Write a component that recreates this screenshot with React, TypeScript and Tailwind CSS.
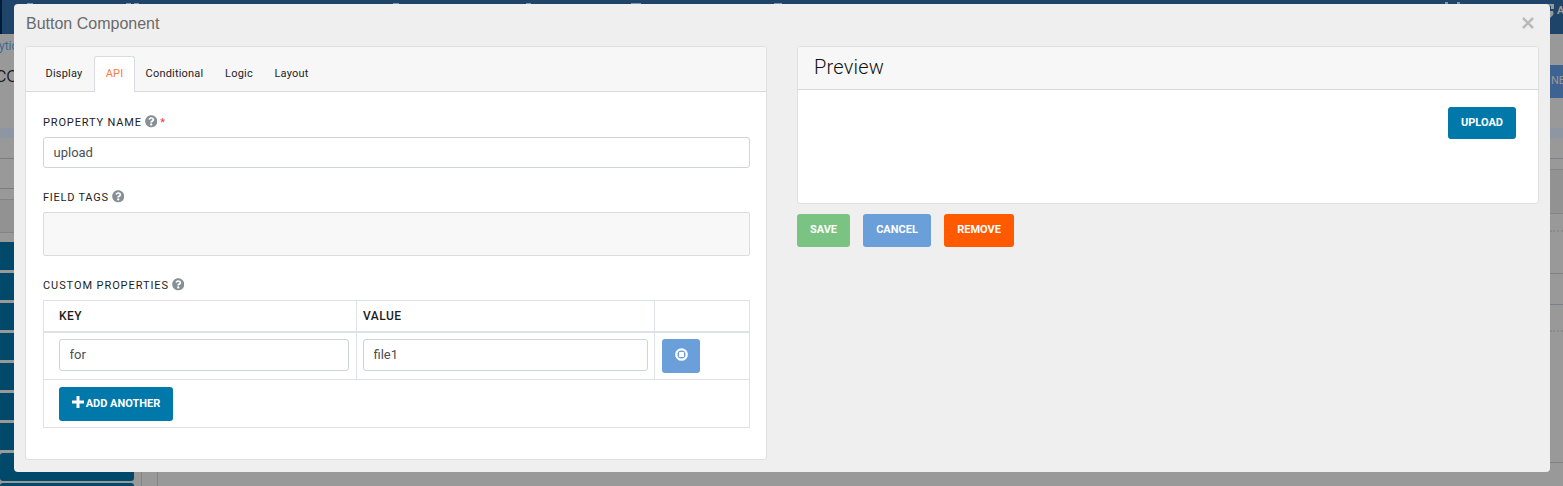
import type { ReactNode } from "react";
import { FaQuestionCircle } from "react-icons/fa";

const tabs = ["Display", "API", "Conditional", "Logic", "Layout"];
const tabWidths = ["w-[60px]", "w-[41px]", "w-[79px]", "w-[50px]", "w-[55px]"];

function Label({ text, required, className }: { text: string; required?: boolean; className: string }) {
  return (
    <div className={`flex h-4 items-start text-[11px] leading-[17px] text-[#1d1d1d] ${className}`}>
      <span>{text}</span>
      <FaQuestionCircle className="ml-[3px] mt-px size-[12.5px] text-[#868e96]" />
      {required && <span className="ml-[3px] text-[#f33]">*</span>}
    </div>
  );
}

function Button({ children, className }: { children: ReactNode; className: string }) {
  return (
    <button className={`flex items-start justify-center rounded-[3px] text-[11px] font-bold leading-4 text-white ${className}`}>
      {children}
    </button>
  );
}

function Field({ value, className }: { value: string; className: string }) {
  return (
    <input
      readOnly
      value={value}
      className={`block rounded-[3px] border border-[#ced4da] bg-white px-[9.5px] text-[13px] text-[#495057] outline-none ${className}`}
    />
  );
}

function Backdrop() {
  return (
    <div className="absolute inset-0 flex flex-col overflow-hidden bg-[#999]">
      <div className="flex h-[34px] shrink-0 border-l-2 border-[#001c3b] bg-[#1e4469]">
        <i className="ml-[25px] mt-[3px] h-px w-[6px] shrink-0 bg-[#8395a8]" />
        <i className="ml-[93px] mt-[3px] h-px w-[5px] shrink-0 bg-[#8395a8]" />
        <i className="ml-[3px] mt-[3px] h-px w-[5px] shrink-0 bg-[#8395a8]" />
        <i className="ml-[254px] mt-[3px] h-px w-[6px] shrink-0 bg-[#8395a8]" />
        <i className="ml-[127px] mt-[3px] h-px w-[5px] shrink-0 bg-[#8395a8]" />
        <i className="ml-[100px] mt-[3px] h-px w-[10px] shrink-0 bg-[#8395a8]" />
        <i className="ml-[133px] mt-[3px] h-px w-[8px] shrink-0 bg-[#8395a8]" />
        <i className="ml-[663px] mt-[2px] h-[2px] w-[3px] shrink-0 bg-[#8395a8]" />
        <i className="ml-[9px] mt-[2px] h-[2px] w-[3px] shrink-0 bg-[#8395a8]" />
        <svg className="ml-[86px] mt-[4px] h-[14px] w-[8px] shrink-0" viewBox="0 0 8 14">
          <path d="M0 0h8v5H5V2zM4 7h3q1 2 0 4l-3 3z" fill="#999" />
        </svg>
        <span className="ml-[3px] mt-[3px] shrink-0 text-[11px] font-bold leading-4 text-[#999]">A</span>
      </div>
      <div className="flex flex-1 justify-between">
        <div className="flex">
          <div className="flex w-[134px] flex-col">
            <div className="h-[94px] w-[40px]">
              <div className="pt-[4px] text-[12px] leading-4 text-[#3e6a93]">
                <span className="-ml-px">ytics</span>
              </div>
              <div className="-ml-[5px] mt-[7px] text-[22px] font-light leading-7 text-[#111]">co</div>
            </div>
            <div className="h-[10px] bg-[#8f96a3]" />
            <div className="h-[21px] border-b border-[#7c7c80]" />
            <div className="h-[30px] border-b border-[#7c7c80]" />
            <div className="mt-[10px] h-[34px] border-y border-[#858585] bg-[#929292]" />
            <div className="mt-[9px] flex flex-col gap-[3px]">
              <div className="h-[28px] bg-[#00496a]" />
              {[0, 1, 2, 3, 4, 5].map((i) => (
                <div key={i} className="h-[27px] bg-[#00496a]" />
              ))}
              <div className="-mb-px h-[28px] rounded-[3px] bg-[#00496a]" />
              <div className="h-[27px] rounded-[3px] bg-[#00496a]" />
            </div>
          </div>
          <div className="ml-[7px] w-[17px] border-x border-[#858585]" />
        </div>
        <div className="flex w-[13px] flex-col">
          <div className="mt-[31px] h-[33px] bg-[#3f6390] pl-px text-[11px] leading-[31px] text-[#999]">NE</div>
          <div className="mt-[30px] h-[10px] bg-[#8f96a3]" />
          <div className="h-[21px] border-b border-[#7c7f88]" />
          <div className="mt-[10px] h-[45px] border-y border-[#858585] bg-[#929292]" />
          <div className="h-[18px] border-b-2 border-dotted border-[#8a8a8a]" />
          <div className="h-[42px] border-b border-[#808080]" />
          <div className="h-[31px] border-b border-[#797e88]" />
          <div className="h-[27px] border-b-2 border-dotted border-[#8a8a8a]" />
          <div className="h-[131px] border-b border-[#808080]" />
        </div>
      </div>
    </div>
  );
}

export default function App() {
  return (
    <div className="relative h-[486px] w-[1563px] overflow-hidden pl-[14px] pt-[4px] font-['Roboto',sans-serif]">
      <Backdrop />
      <div className="relative flex h-[468px] w-[1536px] flex-col rounded-[4px] bg-[#efefef] pl-[11px]">
        <header className="flex h-[42px] shrink-0 justify-between pr-[15px]">
          <h1 className="ml-px mt-[8px] font-['Liberation_Sans',sans-serif] text-[16px] leading-6 text-[#6a6a6a]">Button Component</h1>
          <button aria-label="Close" className="mt-[12px] h-[14px]">
            <svg className="size-[14px]" viewBox="0 0 14 14" stroke="#bababa" strokeWidth="2.5">
              <path d="M2 2l10 10M12 2L2 12" />
            </svg>
          </button>
        </header>
        <main className="flex">
          <section className="h-[414px] w-[742px] rounded-[3px] border border-[#dfdfdf] bg-white">
            <nav className="flex h-[45px] items-end rounded-t-[3px] border-b border-[#d9d9d9] bg-[#f7f7f7] pl-[8px]">
              {tabs.map((tab, i) => (
                <div
                  key={tab}
                  className={`-mb-px flex h-[36px] items-center justify-center rounded-t-[3px] border border-b-0 text-[11px] tracking-[0.2px] ${tabWidths[i]} ${
                    tab === "API" ? "border-[#d8dce2] bg-white text-[#f97d3c]" : "border-transparent text-[#1d1d1d]"
                  }`}
                >
                  {tab}
                </div>
              ))}
            </nav>
            <div className="pl-[17px]">
              <Label text="PROPERTY NAME" required className="mt-[22px] tracking-[0.85px]" />
              <Field value="upload" className="mt-[7px] h-[31px] w-[707px]" />
              <Label text="FIELD TAGS" className="mt-[21px] tracking-[0.75px]" />
              <div className="mt-[7px] h-[44px] w-[707px] rounded-[2px] border border-[#dcdcdc] bg-[#f8f8f8]" />
              <Label text="CUSTOM PROPERTIES" className="mt-[21px] tracking-[0.92px]" />
              <table className="mt-[7px] w-[707px] table-fixed border-separate border-spacing-0 border-l border-t border-[#dee2e6] text-left">
                <colgroup>
                  <col className="w-[313px]" />
                  <col className="w-[298px]" />
                  <col className="w-[95px]" />
                </colgroup>
                <thead>
                  <tr className="h-[32px] text-[12px] leading-4 text-[#1d1d1d]">
                    <th className="border-b-2 border-r border-[#dee2e6] p-0 pl-[15px] font-medium tracking-[0.5px]">KEY</th>
                    <th className="border-b-2 border-r border-[#dee2e6] p-0 pl-[6px] font-medium tracking-[0.5px]">VALUE</th>
                    <th className="border-b-2 border-r border-[#dee2e6] p-0" />
                  </tr>
                </thead>
                <tbody>
                  <tr className="h-[47px] align-top">
                    <td className="border-b border-r border-[#dee2e6] p-0 pl-[15px] pt-[6px]">
                      <Field value="for" className="h-[32px] w-[290px] pb-[2px]" />
                    </td>
                    <td className="border-b border-r border-[#dee2e6] p-0 pl-[6px] pt-[6px]">
                      <Field value="file1" className="h-[32px] w-[285px] pb-[2px]" />
                    </td>
                    <td className="border-b border-r border-[#dee2e6] p-0 pl-[7px] pt-[6px]">
                      <Button className="h-[34px] w-[38px] bg-[#6a9fda] pt-[9px]">
                        <svg className="size-[13px]" viewBox="0 0 13 13">
                          <circle cx="6.5" cy="6.5" r="5.2" fill="none" stroke="white" strokeWidth="2.3" />
                          <rect x="4" y="4" width="5" height="5" rx=".7" fill="white" />
                        </svg>
                      </Button>
                    </td>
                  </tr>
                  <tr className="h-[48px] align-top">
                    <td colSpan={3} className="border-b border-r border-[#dee2e6] p-0 pl-[15px] pt-[7px]">
                      <Button className="h-[34px] w-[114px] bg-[#0079aa] pt-[9px]">
                        <svg className="mr-[2px] size-3" viewBox="0 0 12 12" fill="white">
                          <path d="M4.5 0h3v4.5H12v3H7.500V12h-3V7.500H0v-3h4.500z" />
                        </svg>
                        ADD ANOTHER
                      </Button>
                    </td>
                  </tr>
                </tbody>
              </table>
            </div>
          </section>
          <aside className="ml-[30px]">
            <section className="h-[158px] w-[742px] rounded-[3px] border border-[#dfdfdf] bg-white">
              <h2 className="h-[43px] rounded-t-[3px] border-b border-[#d9d9d9] bg-[#f7f7f7] pl-[16px] text-[20px] font-light leading-[40px] tracking-[0.2px] text-[#111]">Preview</h2>
              <div className="flex justify-end pr-[22px] pt-[17px]">
                <Button className="h-[32px] w-[68px] bg-[#0079aa] pt-[8px]">UPLOAD</Button>
              </div>
            </section>
            <div className="mt-[10px] flex gap-[13px]">
              <Button className="h-[33px] w-[53px] bg-[#7ac382] pt-[8px]">SAVE</Button>
              <Button className="h-[33px] w-[68px] bg-[#6a9fda] pt-[8px]">CANCEL</Button>
              <Button className="h-[33px] w-[70px] bg-[#ff5a00] pt-[8px]">REMOVE</Button>
            </div>
          </aside>
        </main>
      </div>
    </div>
  );
}
